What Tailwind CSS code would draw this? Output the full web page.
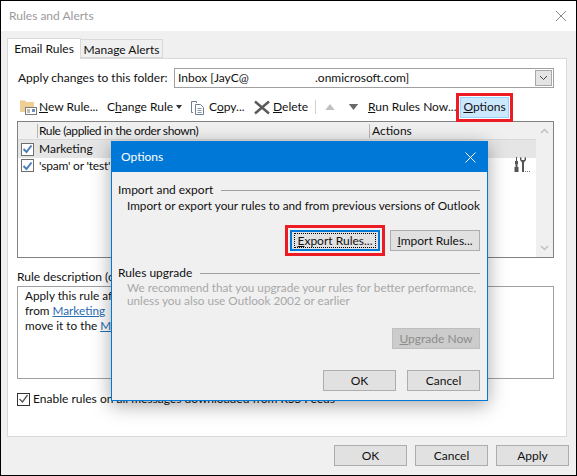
<!DOCTYPE html>
<html>
<head>
<meta charset="utf-8">
<script src="https://cdn.jsdelivr.net/npm/@tailwindcss/browser@4"></script>
</head>
<body class="m-0 bg-black">
<div class="relative w-[577px] h-[476px] overflow-hidden whitespace-nowrap border border-black bg-[#f0f0f0] text-[12px] leading-[16px] text-[#111] font-['Lato','Noto_Sans',sans-serif]">
  <!-- title bar -->
  <div class="flex h-[30px] items-center justify-between bg-white pl-[8px] pr-[8px]">
    <span class="text-[12px] text-[#9a9a9a]">Rules and Alerts</span>
    <svg width="12" height="12" viewBox="0 0 12 12" class="mr-[1px]"><path d="M1 1 11 11M11 1 1 11" stroke="#8a8a8a" stroke-width="1" fill="none"/></svg>
  </div>
  <!-- tabs -->
  <div class="mt-[7px] flex h-[20px] items-end pl-[6px]">
    <div class="z-10 mb-[-1px] flex h-[21px] w-[74px] items-center justify-center border border-b-0 border-[#d9d9d9] bg-white">Email Rules</div>
    <div class="flex h-[19px] w-[82px] items-center justify-center border border-l-0 border-[#d9d9d9] bg-[#f0f0f0] pt-[2px]">Manage Alerts</div>
  </div>
  <!-- panel -->
  <div class="ml-[6px] h-[379px] w-[560px] border border-[#d9d9d9] bg-white pl-[9px] pt-[9px]">
    <div class="flex h-[20px] items-center">
      <span class="w-[157px] pl-[1px]">Apply changes to this folder:</span>
      <div class="flex h-[20px] w-[380px] items-center justify-between border border-[#a0a0a0] pl-[3px] pr-[1px]">
        <span class="flex"><span class="w-[137px]">Inbox [JayC@</span><span>.onmicrosoft.com]</span></span>
        <div class="flex h-[16px] w-[17px] items-center justify-center border border-[#a8a8a8] bg-[#e4e4e4]">
          <svg width="9" height="6" viewBox="0 0 9 6"><path d="M1 1 4.500 4.500 8 1" stroke="#444" fill="none"/></svg>
        </div>
      </div>
    </div>
    <!-- toolbar -->
    <div class="mt-[8px] flex h-[22px] items-center">
      <svg width="20" height="17" viewBox="0 0 20 17" class="ml-[2px]">
        <path d="M1 3V1.500H6L7 3H15V6H1Z" fill="#eec98a"/>
        <rect x="1" y="3" width="14" height="10" fill="#f0cf95"/>
        <rect x="6.500" y="8.500" width="11" height="7" fill="#fff" stroke="#7a7a7a"/>
        <path d="M8 11H11M8 13H11" stroke="#7a7a7a"/>
        <rect x="13" y="10" width="3" height="3" fill="#6f8fb5"/>
      </svg>
      <span class="w-[58px]"><u>N</u>ew Rule...</span>
      <span class="ml-[10px] w-[66px]">C<u>h</u>ange Rule</span>
      <svg width="6" height="4" viewBox="0 0 6 4" class="ml-[3px]"><path d="M0 0H6L3 4Z" fill="#333"/></svg>
      <svg width="15" height="15" viewBox="0 0 15 15" class="ml-[8px]">
        <path d="M1.500 1.500H6.500V3M3 12.500H1.500V1.500" fill="none" stroke="#6d7f95"/>
        <path d="M5.500 4.500H10.500L13.500 7.500V14.500H5.500Z" fill="#fff" stroke="#6d7f95"/>
        <path d="M7.500 8.500H11.500M7.500 10.500H11.500M7.500 12.500H11.500" stroke="#8a96a6"/>
      </svg>
      <span class="ml-[4px] w-[35px]">C<u>o</u>py...</span>
      <svg width="16" height="15" viewBox="0 0 16 15" class="ml-[10px]"><path d="M1 1.500 15 13.500M15 1.500 1 13.500" stroke="#5a5a5a" stroke-width="2.400" fill="none"/></svg>
      <span class="ml-[3px] w-[33px]"><u>D</u>elete</span>
      <div class="ml-[9px] h-[14px] w-px bg-[#d0d0d0]"></div>
      <svg width="10" height="6" viewBox="0 0 11 7" class="ml-[9px]"><path d="M5.500 0 11 7H0Z" fill="#c0c0c0"/></svg>
      <svg width="11" height="6" viewBox="0 0 11 7" class="ml-[13px]"><path d="M0 0H11L5.500 7Z" fill="#6a6a6a"/></svg>
      <span class="ml-[9px] w-[87px]"><u>R</u>un Rules Now...</span>
      <div class="relative ml-[5px] flex h-[21px] w-[49px] shrink-0 items-center justify-center border border-[#99d1ff] bg-[#cce8ff]">
        <span><u>O</u>ptions</span>
        <div class="absolute -inset-[5px] border-[3px] border-[#ed1c24]"></div>
      </div>
    </div>
    <!-- rule list -->
    <div class="mt-[3px] flex h-[137px] w-[537px] border border-[#828282]">
      <div class="flex-1">
        <div class="flex h-[18px] items-center border-b border-[#d9d9d9] bg-[#f0f0f0]">
          <div class="h-[14px] w-[20px] border-r border-[#b5b5b5]"></div>
          <span class="ml-[1px] w-[330px] tracking-[-0.4px]">Rule (applied in the order shown)</span>
          <div class="h-[14px] w-px bg-[#b5b5b5]"></div>
          <span class="ml-[2px]">Actions</span>
        </div>
        <div class="flex h-[18px] items-center bg-[#e5e5e5]">
          <div class="ml-[3px] flex h-[13px] w-[13px] items-center justify-center border border-[#6e6e6e] bg-white">
            <svg width="11" height="10" viewBox="0 0 11 10"><path d="M1.500 5 4.500 8 9.500 1.500" fill="none" stroke="#4a7ebb" stroke-width="2"/></svg>
          </div>
          <span class="ml-[5px]">Marketing</span>
        </div>
        <div class="flex h-[15px] items-center">
          <div class="ml-[3px] flex h-[13px] w-[13px] items-center justify-center border border-[#6e6e6e] bg-white">
            <svg width="11" height="10" viewBox="0 0 11 10"><path d="M1.500 5 4.500 8 9.500 1.500" fill="none" stroke="#4a7ebb" stroke-width="2"/></svg>
          </div>
          <span class="ml-[5px] w-[83px] tracking-[-0.2px]">'spam' or 'test'</span>
          <svg width="16" height="17" viewBox="0 0 16 17" class="ml-[392px] shrink-0">
            <path d="M2 0H3V4H4V7H3.500V10H4.500V15H0.500V10H1.500V7H1V4H2Z" fill="#555"/>
            <path d="M6 0V3L8 5.500V15H10V5.500L12 3V0L10.500 1V3H7.500V1Z" fill="#555"/>
            <path d="M11 14H12V15H11ZM13 14H14V15H13ZM15 14H16V15H15Z" fill="#777"/>
          </svg>
        </div>
      </div>
      <div class="flex w-[17px] flex-col items-center justify-between bg-[#f0f0f0] py-[6px]">
        <svg width="9" height="6" viewBox="0 0 9 6"><path d="M1 5 4.500 1.500 8 5" stroke="#c0c0c0" stroke-width="1.500" fill="none"/></svg>
        <svg width="9" height="6" viewBox="0 0 9 6"><path d="M1 1 4.500 4.500 8 1" stroke="#c0c0c0" stroke-width="1.500" fill="none"/></svg>
      </div>
    </div>
    <!-- description -->
    <div class="mt-[11px] h-[16px]">Rule description (click an underlined value to edit):</div>
    <div class="mt-[1px] h-[93px] w-[537px] border border-[#a0a0a0] pl-[7px] pt-[1px] text-[11.750px] leading-[15px]">
      <div>Apply this rule after the message arrives</div>
      <div>from <span class="text-[#2a6cb0] underline">Marketing</span></div>
      <div>move it to the <span class="text-[#2a6cb0] underline">Marketing</span> folder</div>
    </div>
    <div class="mt-[12px] flex items-center">
      <div class="flex h-[13px] w-[13px] items-center justify-center border border-[#333] bg-white">
        <svg width="11" height="10" viewBox="0 0 11 10"><path d="M1.500 5 4.500 8 9.500 1" fill="none" stroke="#555" stroke-width="1.300"/></svg>
      </div>
      <span class="ml-[3px]">Enable rules on all messages downloaded from RSS Feeds</span>
    </div>
  </div>
  <!-- footer -->
  <div class="mt-[8px] flex justify-end gap-[8px] pr-[7px]">
    <div class="flex h-[21px] w-[73px] items-center justify-center border border-[#adadad] bg-[#e1e1e1]">OK</div>
    <div class="flex h-[21px] w-[73px] items-center justify-center border border-[#adadad] bg-[#e1e1e1]">Cancel</div>
    <div class="flex h-[21px] w-[73px] items-center justify-center border border-[#adadad] bg-[#e1e1e1]">Apply</div>
  </div>
  <!-- Options dialog -->
  <div class="absolute left-[110px] top-[140px] h-[260px] w-[377px] border border-[#0078d7] bg-[#f0f0f0] shadow-[0_4px_18px_rgba(0,0,0,0.35)]">
    <div class="flex h-[30px] items-center justify-between bg-[#0078d7] pl-[9px] pr-[11px] text-white">
      <span class="text-[12px]">Options</span>
      <svg width="11" height="11" viewBox="0 0 11 11"><path d="M0.500 0.500 10.500 10.500M10.500 0.500 0.500 10.500" stroke="#fff" fill="none"/></svg>
    </div>
    <div class="pl-[6px] pr-[7px]">
      <div class="mt-[10px] flex h-[16px] items-center">
        <span>Import and export</span>
        <div class="ml-[8px] h-px flex-1 bg-[#a0a0a0]"></div>
      </div>
      <div class="pl-[9px] text-[11.750px]">Import or export your rules to and from previous versions of Outlook</div>
      <div class="mt-[16px] flex justify-end gap-[10px]">
        <div class="relative flex h-[21px] w-[90px] items-center justify-center border-2 border-[#0078d7] bg-[#e1e1e1]">
          <div class="flex h-[15px] w-[82px] items-center justify-center border border-dotted border-black"><span><u>E</u>xport Rules...</span></div>
          <div class="absolute -inset-[7px] border-[3px] border-[#ed1c24]"></div>
        </div>
        <div class="flex h-[21px] w-[90px] items-center justify-center border border-[#adadad] bg-[#e1e1e1]"><span><u>I</u>mport Rules...</span></div>
      </div>
      <div class="mt-[14px] flex h-[16px] items-center">
        <span>Rules upgrade</span>
        <div class="ml-[8px] h-px flex-1 bg-[#a0a0a0]"></div>
      </div>
      <div class="pl-[9px] text-[11.750px] leading-[13px] text-[#a8a8a8]">We recommend that you upgrade your rules for better performance,<br>unless you also use Outlook 2002 or earlier</div>
      <div class="mt-[21px] flex justify-end">
        <div class="flex h-[21px] w-[88px] items-center justify-center border border-[#bfbfbf] bg-[#cccccc] text-[#8c8c8c]"><span><u>U</u>pgrade Now</span></div>
      </div>
      <div class="mt-[21px] flex justify-end gap-[11px]">
        <div class="flex h-[21px] w-[73px] items-center justify-center border border-[#adadad] bg-[#e1e1e1]">OK</div>
        <div class="flex h-[21px] w-[73px] items-center justify-center border border-[#adadad] bg-[#e1e1e1]">Cancel</div>
      </div>
    </div>
  </div>
</div>
</body>
</html>
